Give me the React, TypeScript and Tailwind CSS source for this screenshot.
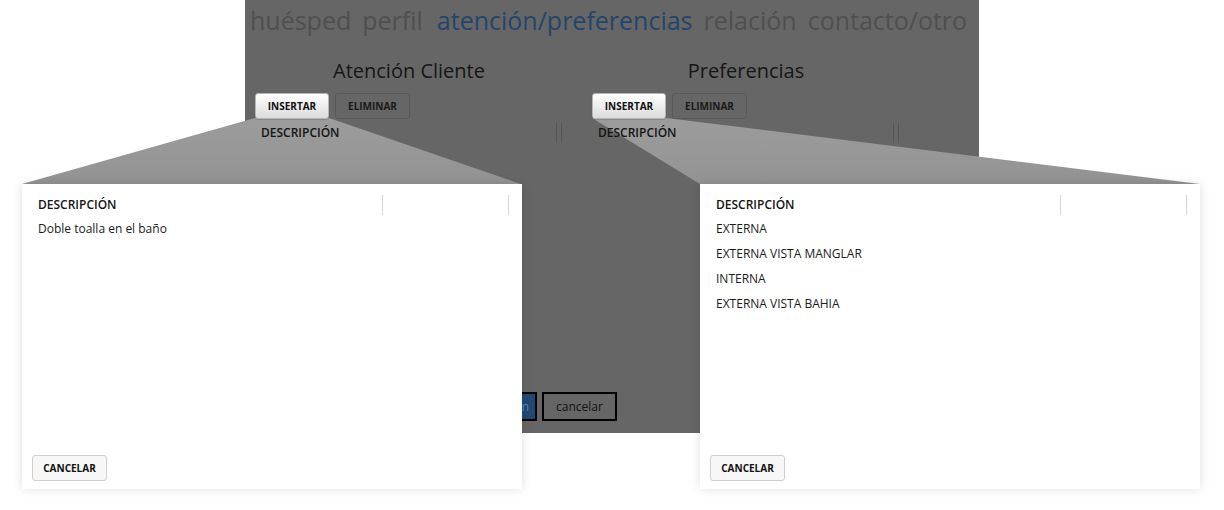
import React from "react";

const FONT = "font-['Open_Sans','Noto_Sans',sans-serif]";

function PanelColumn({ title }: { title: string }) {
  return (
    <div className="w-[308px] flex flex-col">
      <div className="h-[30px] flex items-center justify-center text-[20px] text-[#161616] leading-none">
        {title}
      </div>
      <div className="mt-[7px] flex gap-[6px]">
        <div className="w-[74px] h-[26px] rounded-[3px] border border-[#b5b5b5] bg-gradient-to-b from-white to-[#dcdcdc] flex items-center justify-center text-[10px] font-bold text-[#111] shadow-[0_1px_1px_rgba(0,0,0,0.15)]">
          INSERTAR
        </div>
        <div className="w-[75px] h-[26px] rounded-[3px] border border-[#585858] bg-[#666666] flex items-center justify-center text-[10px] font-bold text-[#1a1a1a]">
          ELIMINAR
        </div>
      </div>
      <div className="mt-[4px] h-[20px] flex items-stretch">
        <div className="w-[302px] pl-[6px] flex items-center text-[12px] font-semibold text-[#151515] border-r border-[#555555]">
          DESCRIPCIÓN
        </div>
        <div className="w-[5px] border-r border-[#555555]" />
      </div>
    </div>
  );
}

function Popup({ left, rows }: { left: string; rows: string[] }) {
  return (
    <div
      className={`absolute top-[184px] ${left} w-[500px] h-[305px] bg-white shadow-[0_0_10px_rgba(0,0,0,0.13)] flex flex-col z-20`}
    >
      <div className="pt-[11px] pl-[16px]">
        <div className="h-[20px] flex items-stretch">
          <div className="w-[345px] flex items-center text-[12px] font-semibold text-[#151515] border-r border-[#d6d6d6]">
            DESCRIPCIÓN
          </div>
          <div className="w-[126px] border-r border-[#d6d6d6]" />
        </div>
        <div className="mt-[1px] flex flex-col">
          {rows.map((r) => (
            <div key={r} className="h-[25px] flex items-center text-[12px] text-[#1b1b1b]">
              {r}
            </div>
          ))}
        </div>
      </div>
      <div className="mt-auto pl-[10px] pb-[8px]">
        <div className="w-[75px] h-[26px] rounded-[3px] border border-[#cfcfcf] bg-[#f7f7f7] flex items-center justify-center text-[10px] font-bold text-[#111]">
          CANCELAR
        </div>
      </div>
    </div>
  );
}

export default function App() {
  return (
    <div className={`relative w-[1224px] h-[510px] bg-white overflow-hidden ${FONT}`}>
      <div className="ml-[245px] w-[734px] h-[433px] bg-[#666666] flex flex-col">
        <div className="relative z-10 h-[41px] pl-[5px] flex items-center gap-[11px] text-[25px] leading-none text-[#4f4f4f] whitespace-nowrap">
          <span>huésped</span>
          <span>perfil</span>
          <span className="ml-[3px] text-[#24456b]">atención/preferencias</span>
          <span>relación</span>
          <span>contacto/otro</span>
        </div>
        <div className="relative z-10 mt-[15px] pl-[10px] flex gap-[29px]">
          <PanelColumn title="Atención Cliente" />
          <PanelColumn title="Preferencias" />
        </div>
        <div className="relative z-10 mt-auto mb-[12px] pl-[182px] flex gap-[5px]">
          <div className="w-[110px] h-[29px] border-2 border-black bg-[#1f4a73] flex items-center justify-end pr-[6px] text-[12px] text-[#5d86b0]">
            información
          </div>
          <div className="w-[75px] h-[29px] border-2 border-black flex items-center justify-center text-[12px] text-[#111111]">
            cancelar
          </div>
        </div>
      </div>

      <svg className="absolute left-0 top-0" width="1224" height="510" viewBox="0 0 1224 510">
        <defs>
          <linearGradient id="g" x1="0" y1="0" x2="0" y2="1">
            <stop offset="0" stopColor="#9c9c9c" />
            <stop offset="1" stopColor="#939393" />
          </linearGradient>
        </defs>
        <polygon points="255,118 329,118 521,184 22,184" fill="url(#g)" />
        <polygon points="592,118 666,118 1200,184 700,184" fill="url(#g)" />
      </svg>

      <Popup left="left-[22px]" rows={["Doble toalla en el baño"]} />
      <Popup
        left="left-[700px]"
        rows={["EXTERNA", "EXTERNA VISTA MANGLAR", "INTERNA", "EXTERNA VISTA BAHIA"]}
      />
    </div>
  );
}
